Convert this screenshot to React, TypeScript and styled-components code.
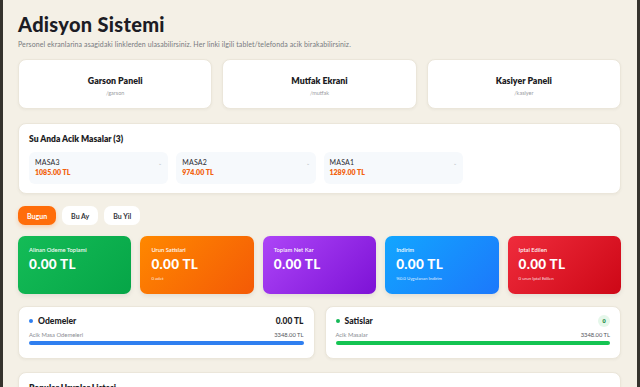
import styled, { createGlobalStyle } from 'styled-components';

const GlobalStyle = createGlobalStyle`
  html, body {
    margin: 0;
    padding: 0;
    background: #f4f0e6;
    font-family: 'Lato', 'Noto Sans', sans-serif;
    color: #1c1c24;
  }
  * { box-sizing: border-box; }
`;

const Frame = styled.div`
  border-left: 3px solid #35332d;
  border-right: 3px solid #35332d;
  padding: 12px 16px 0 15px;
  overflow: hidden;
  height: 387px;
`;

const Title = styled.h1`
  margin: 0;
  font-size: 20px;
  font-weight: 900;
  letter-spacing: 0.3px;
  line-height: 24px;
`;

const Subtitle = styled.p`
  margin: 4px 0 0;
  font-size: 7px;
  letter-spacing: 0.1px;
  color: #777a80;
`;

const LinkGrid = styled.div`
  display: grid;
  grid-template-columns: repeat(3, 1fr);
  gap: 10px;
  margin-top: 11px;
`;

const Card = styled.div`
  background: #fff;
  border-radius: 8px;
  border: 1px solid #ebe6da;
  box-shadow: 0 1px 3px rgba(60, 50, 30, 0.05);
`;

const LinkCard = styled(Card)`
  height: 50px;
  display: flex;
  flex-direction: column;
  align-items: center;
  justify-content: center;
  gap: 4px;
`;

const LinkTitle = styled.div`
  font-size: 8.8px;
  font-weight: 800;
  padding-top: 2px;
`;

const LinkPath = styled.div`
  font-size: 5.5px;
  color: #9a9ca2;
`;

const TablesCard = styled(Card)`
  margin-top: 14px;
  padding: 9px 10px 9px 10px;
`;

const SectionTitle = styled.div`
  font-size: 8.5px;
  font-weight: 800;
  margin-top: 1px;
`;

const TableGrid = styled.div`
  display: grid;
  grid-template-columns: repeat(4, 1fr);
  gap: 8px;
  margin-top: 8px;
`;

const TableItem = styled.div`
  position: relative;
  background: #f6f9fc;
  border-radius: 6px;
  padding: 6px 6px 7px 6px;
  height: 32px;
`;

const TableName = styled.div`
  font-size: 7px;
  color: #2a2a30;
  letter-spacing: 0.2px;
`;

const TablePrice = styled.div`
  font-size: 7px;
  font-weight: 800;
  color: #f2620d;
  margin-top: 2px;
`;

const Chevron = styled.span`
  position: absolute;
  right: 6px;
  top: 8px;
  font-size: 5px;
  color: #b5b8bd;
`;

const Tabs = styled.div`
  display: flex;
  gap: 6px;
  margin-top: 12px;
`;

const Tab = styled.button<{ $active?: boolean }>`
  border: none;
  font-family: inherit;
  height: 19px;
  padding: 0 9px;
  border-radius: 7px;
  font-size: 7px;
  font-weight: 700;
  background: ${(p) => (p.$active ? '#ff6d0a' : '#fff')};
  color: ${(p) => (p.$active ? '#fff' : '#33343a')};
  box-shadow: ${(p) => (p.$active ? '0 2px 4px rgba(255,110,10,0.25)' : 'none')};
`;

const StatGrid = styled.div`
  display: grid;
  grid-template-columns: repeat(5, 1fr);
  gap: 9px;
  margin-top: 11px;
`;

const StatCard = styled.div<{ $from: string; $to: string }>`
  height: 58px;
  border-radius: 7px;
  padding: 10px 11px;
  color: #fff;
  background: linear-gradient(135deg, ${(p) => p.$from}, ${(p) => p.$to});
  box-shadow: 0 2px 5px rgba(0, 0, 0, 0.08);
`;

const StatLabel = styled.div`
  font-size: 5.8px;
  font-weight: 600;
  opacity: 0.95;
`;

const StatValue = styled.div`
  font-size: 13.5px;
  font-weight: 900;
  margin-top: 3px;
  letter-spacing: 0.3px;
`;

const StatSub = styled.div`
  font-size: 4.4px;
  opacity: 0.85;
  margin-top: 4px;
`;

const SummaryGrid = styled.div`
  display: grid;
  grid-template-columns: 1fr 1fr;
  gap: 10px;
  margin-top: 12px;
`;

const SummaryCard = styled(Card)`
  padding: 7px 10px 10px;
  height: 53px;
`;

const SummaryHead = styled.div`
  display: flex;
  align-items: center;
  justify-content: space-between;
  height: 14px;
`;

const SummaryTitle = styled.div`
  display: flex;
  align-items: center;
  gap: 5px;
  font-size: 8.6px;
  font-weight: 900;
`;

const Dot = styled.span<{ $color: string }>`
  width: 4px;
  height: 4px;
  border-radius: 50%;
  background: ${(p) => p.$color};
`;

const SummaryAmount = styled.div`
  font-size: 8.4px;
  font-weight: 900;
`;

const Badge = styled.span`
  width: 12px;
  height: 12px;
  border-radius: 50%;
  background: #e5f7ea;
  color: #1b8a45;
  font-size: 5.5px;
  font-weight: 800;
  display: flex;
  align-items: center;
  justify-content: center;
`;

const SummaryRow = styled.div`
  display: flex;
  justify-content: space-between;
  font-size: 5.8px;
  color: #8a8c92;
  margin-top: 3px;
`;

const RowValue = styled.span`
  color: #55575d;
`;

const Bar = styled.div<{ $color: string }>`
  height: 4px;
  border-radius: 2px;
  background: ${(p) => p.$color};
  margin-top: 3px;
`;

const BottomCard = styled(Card)`
  margin-top: 13px;
  padding: 9px 10px;
  height: 60px;
`;

const tables = [
  { name: 'MASA3', price: '1085.00 TL' },
  { name: 'MASA2', price: '974.00 TL' },
  { name: 'MASA1', price: '1289.00 TL' },
];

const stats = [
  { label: 'Alinan Odeme Toplami', value: '0.00 TL', sub: '', from: '#14bc57', to: '#06a547' },
  { label: 'Urun Satislari', value: '0.00 TL', sub: '0 adet', from: '#ff8800', to: '#f45a06' },
  { label: 'Toplam Net Kar', value: '0.00 TL', sub: '', from: '#ad45f7', to: '#7d12d6' },
  { label: 'Indirim', value: '0.00 TL', sub: '%0.0 Uygulanan Indirim', from: '#12a6ff', to: '#1c78fb' },
  { label: 'Iptal Edilen', value: '0.00 TL', sub: '0 urun Iptal Edilen', from: '#ef2c3c', to: '#cd0716' },
];

export default function App() {
  return (
    <>
      <GlobalStyle />
      <Frame>
        <Title>Adisyon Sistemi</Title>
        <Subtitle>
          Personel ekranlarina asagidaki linklerden ulasabilirsiniz. Her linki ilgili tablet/telefonda acik birakabilirsiniz.
        </Subtitle>

        <LinkGrid>
          <LinkCard>
            <LinkTitle>Garson Paneli</LinkTitle>
            <LinkPath>/garson</LinkPath>
          </LinkCard>
          <LinkCard>
            <LinkTitle>Mutfak Ekrani</LinkTitle>
            <LinkPath>/mutfak</LinkPath>
          </LinkCard>
          <LinkCard>
            <LinkTitle>Kasiyer Paneli</LinkTitle>
            <LinkPath>/kasiyer</LinkPath>
          </LinkCard>
        </LinkGrid>

        <TablesCard>
          <SectionTitle>Su Anda Acik Masalar (3)</SectionTitle>
          <TableGrid>
            {tables.map((t) => (
              <TableItem key={t.name}>
                <TableName>{t.name}</TableName>
                <TablePrice>{t.price}</TablePrice>
                <Chevron>⌄</Chevron>
              </TableItem>
            ))}
          </TableGrid>
        </TablesCard>

        <Tabs>
          <Tab $active>Bugun</Tab>
          <Tab>Bu Ay</Tab>
          <Tab>Bu Yil</Tab>
        </Tabs>

        <StatGrid>
          {stats.map((s) => (
            <StatCard key={s.label} $from={s.from} $to={s.to}>
              <StatLabel>{s.label}</StatLabel>
              <StatValue>{s.value}</StatValue>
              {s.sub && <StatSub>{s.sub}</StatSub>}
            </StatCard>
          ))}
        </StatGrid>

        <SummaryGrid>
          <SummaryCard>
            <SummaryHead>
              <SummaryTitle>
                <Dot $color="#2f7ff0" />
                Odemeler
              </SummaryTitle>
              <SummaryAmount>0.00 TL</SummaryAmount>
            </SummaryHead>
            <SummaryRow>
              <span>Acik Masa Odemeleri</span>
              <RowValue>3348.00 TL</RowValue>
            </SummaryRow>
            <Bar $color="#2f7ff0" />
          </SummaryCard>
          <SummaryCard>
            <SummaryHead>
              <SummaryTitle>
                <Dot $color="#14b857" />
                Satislar
              </SummaryTitle>
              <Badge>0</Badge>
            </SummaryHead>
            <SummaryRow>
              <span>Acik Masalar</span>
              <RowValue>3348.00 TL</RowValue>
            </SummaryRow>
            <Bar $color="#14c452" />
          </SummaryCard>
        </SummaryGrid>

        <BottomCard>
          <SectionTitle>Populer Urunler Listesi</SectionTitle>
        </BottomCard>
      </Frame>
    </>
  );
}
